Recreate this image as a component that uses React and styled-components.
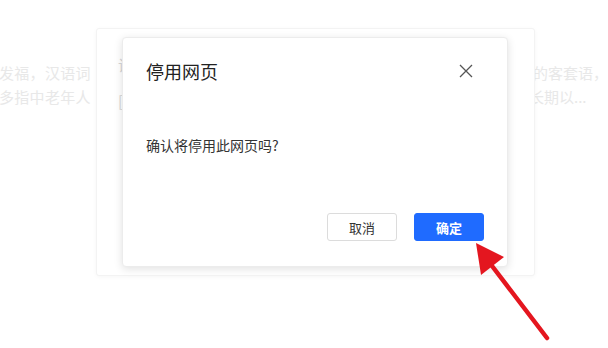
import React from 'react'
import styled, { createGlobalStyle } from 'styled-components'

const GlobalStyle = createGlobalStyle`
  html, body {
    margin: 0;
    padding: 0;
    background: #fff;
  }
  * {
    box-sizing: border-box;
  }
  body {
    font-family: "Noto Sans CJK SC", "Noto Sans", "Liberation Sans", sans-serif;
  }
`

const Stage = styled.div`
  position: relative;
  width: 608px;
  height: 348px;
  overflow: hidden;
  background: #fff;
`

//背景文章
const Article = styled.div`
  padding-top: 61px;
  font-size: 15px;
  line-height: 24px;
  color: #e8e8e8;
`

const Line = styled.div`
  display: flex;
  white-space: nowrap;
  .left {
    width: ${p => p.$split}px;
    margin-left: -1px;
    letter-spacing: 0.3px;
  }
`

//背景卡片
const Panel = styled.div`
  position: absolute;
  left: 96px;
  top: 28px;
  width: 439px;
  height: 248px;
  background: #fff;
  border: 1px solid #f3f3f3;
  border-radius: 3px;
  box-shadow: 0 1px 4px rgba(0, 0, 0, 0.04);
  padding: 18px 0 0 21px;
  font-size: 15px;
  line-height: 36px;
  color: #d6d6d6;
`

//弹窗
const Dialog = styled.div`
  position: absolute;
  left: 122px;
  top: 37px;
  width: 386px;
  height: 230px;
  display: flex;
  flex-direction: column;
  background: #fff;
  border: 1px solid #ececec;
  border-radius: 4px;
  box-shadow: 0 2px 8px rgba(0, 0, 0, 0.12);
  padding: 0 23px 25px 23px;
`

const Header = styled.div`
  display: flex;
  align-items: center;
  justify-content: space-between;
  height: 66px;
  h2 {
    margin: 0;
    font-size: 18px;
    font-weight: 400;
    color: #222;
  }
`

const Close = styled.button`
  display: flex;
  align-items: center;
  justify-content: center;
  width: 20px;
  height: 20px;
  padding: 0;
  margin-right: 8px;
  background: none;
  border: none;
`

const Body = styled.div`
  flex: 1;
  padding-top: 31px;
  font-size: 14px;
  line-height: 20px;
  color: #333;
`

const Footer = styled.div`
  display: flex;
  justify-content: flex-end;
  gap: 17px;
`

const Button = styled.button`
  width: 70px;
  height: 28px;
  padding: 0;
  font-family: inherit;
  font-size: 13px;
  border-radius: 3px;
  border: 1px solid ${p => (p.$primary ? '#1f6bff' : '#dcdcdc')};
  background: ${p => (p.$primary ? '#1f6bff' : '#fff')};
  color: ${p => (p.$primary ? '#fff' : '#333')};
  font-weight: ${p => (p.$primary ? 700 : 400)};
`

const Arrow = styled.svg`
  position: absolute;
  left: 0;
  top: 0;
  pointer-events: none;
`

const App = () => {
  return (
    <Stage>
      <GlobalStyle />
      <Article>
        <Line $split={524}>
          <span className='left'>发福，汉语词</span>
          <span>时的客套语，</span>
        </Line>
        <Line $split={530}>
          <span className='left'>多指中老年人</span>
          <span>长期以...</span>
        </Line>
      </Article>

      <Panel>
        <div>设</div>
        <div>[</div>
      </Panel>

      <Dialog>
        <Header>
          <h2>停用网页</h2>
          <Close>
            <svg width='14' height='14' viewBox='0 0 14 14'>
              <path d='M1 1 L13 13 M13 1 L1 13' stroke='#555' strokeWidth='1.3' fill='none' />
            </svg>
          </Close>
        </Header>
        <Body>确认将停用此网页吗?</Body>
        <Footer>
          <Button>取消</Button>
          <Button $primary>确定</Button>
        </Footer>
      </Dialog>

      <Arrow width='608' height='348' viewBox='0 0 608 348'>
        <line x1='547' y1='338' x2='489' y2='262' stroke='#e4161f' strokeWidth='4.5' strokeLinecap='round' />
        <polygon points='476,243 481,275 504,257' fill='#e4161f' />
      </Arrow>
    </Stage>
  )
}

export default App
